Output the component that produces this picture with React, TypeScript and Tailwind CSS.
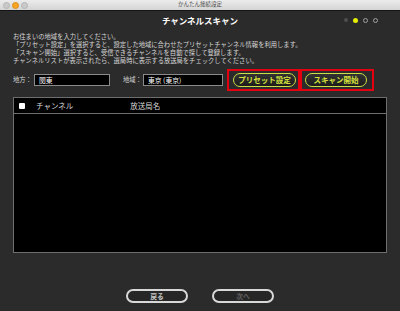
import React from "react";

export default function App() {
  return (
    <div className="w-[400px] h-[311px] bg-[#2b2b2b] flex flex-col overflow-hidden font-['Noto_Sans_CJK_JP','Noto_Sans',sans-serif]">
      {/* title bar */}
      <div className="relative h-[11px] bg-gradient-to-b from-[#ececec] to-[#d4d4d4] border-b border-[#151515] flex items-center justify-center shrink-0">
        <div className="absolute left-[2.5px] top-[1.5px] flex gap-[2px]">
          <span className="w-[7px] h-[7px] rounded-full bg-[#c9c9c9] border border-[#b5b5b5]" />
          <span className="w-[7px] h-[7px] rounded-full bg-[#f6a524] border border-[#dc8d16]" />
          <span className="w-[7px] h-[7px] rounded-full bg-[#c9c9c9] border border-[#b5b5b5]" />
        </div>
        <span className="text-[5.5px] leading-none text-[#4a4a4a]">かんたん接続設定</span>
      </div>

      {/* header */}
      <div className="relative h-[19px] flex items-center justify-center shrink-0">
        <span className="text-[8.5px] font-bold text-white leading-none">チャンネルスキャン</span>
        <div className="absolute right-[22px] top-[6.5px] flex items-center gap-[5px]">
          <span className="w-[4px] h-[4px] rounded-full bg-[#4e4e4e]" />
          <span className="w-[5px] h-[5px] rounded-full bg-[#e3ee00]" />
          <span className="w-[5px] h-[5px] rounded-full border border-[#a0a0a0] bg-[#2b2b2b]" />
          <span className="w-[5px] h-[5px] rounded-full border border-[#a0a0a0] bg-[#2b2b2b]" />
        </div>
      </div>

      {/* instructions */}
      <div className="mt-[3px] pl-[13px] text-[6.3px] leading-[8px] text-[#d6d6d6] whitespace-nowrap">
        <div>お住まいの地域を入力してください。</div>
        <div>「プリセット設定」を選択すると、設定した地域に合わせたプリセットチャンネル情報を利用します。</div>
        <div>「スキャン開始」選択すると、受信できるチャンネルを自動で探して登録します。</div>
        <div>チャンネルリストが表示されたら、選局時に表示する放送局をチェックしてください。</div>
      </div>

      {/* fields row */}
      <div className="mt-[4px] pl-[13px] h-[22px] flex items-center">
        <span className="text-[6.3px] text-[#d6d6d6] w-[21px]">地方：</span>
        <div className="w-[76px] h-[12px] bg-black border border-[#8a8a8a] flex items-center pl-[4px] text-[6.8px] text-white">関東</div>
        <span className="ml-[13px] text-[6.3px] text-[#d6d6d6] w-[20px]">地域：</span>
        <div className="w-[80px] h-[12px] bg-black border border-[#8a8a8a] flex items-center pl-[4px] text-[6.8px] text-white">東京 (東京)</div>
        <div className="ml-[4px] w-[73px] h-[22px] border-2 border-[#e4000f] flex items-center pl-[4px]">
          <div className="w-[63px] h-[14px] rounded-full border-[1.5px] border-[#cfdc46] bg-gradient-to-b from-[#333] to-[#1c1c1c] flex items-center justify-center text-[7.5px] font-bold text-[#d6e23c] leading-none">プリセット設定</div>
        </div>
        <div className="w-[74px] h-[22px] border-2 border-[#e4000f] flex items-center pl-[3px]">
          <div className="w-[62px] h-[14px] rounded-full border-[1.5px] border-[#cfdc46] bg-gradient-to-b from-[#333] to-[#1c1c1c] flex items-center justify-center text-[7.5px] font-bold text-[#d6e23c] leading-none">スキャン開始</div>
        </div>
      </div>

      {/* table */}
      <div className="mt-[6px] ml-[13px] w-[374px] h-[156px] bg-black border border-[#6e6e6e] flex flex-col">
        <div className="h-[16px] border-b border-[#6e6e6e] flex items-center">
          <span className="ml-[5px] w-[6px] h-[6px] bg-white rounded-[1px]" />
          <span className="ml-[11px] text-[7.5px] text-[#d8d8d8] leading-none">チャンネル</span>
          <span className="ml-[57px] text-[7.5px] text-[#d8d8d8] leading-none">放送局名</span>
        </div>
        <div className="flex-1" />
      </div>

      {/* bottom buttons */}
      <div className="mt-[36px] flex justify-center gap-[24px]">
        <div className="w-[62px] h-[14px] rounded-full border-2 border-[#d8d8d8] bg-[#262626] flex items-center justify-center text-[6.8px] font-bold text-[#c4c4c4] leading-none">戻る</div>
        <div className="w-[62px] h-[14px] rounded-full border-2 border-[#d8d8d8] bg-[#262626] flex items-center justify-center text-[6.8px] font-bold text-[#5e5e5e] leading-none">次へ</div>
      </div>
    </div>
  );
}
